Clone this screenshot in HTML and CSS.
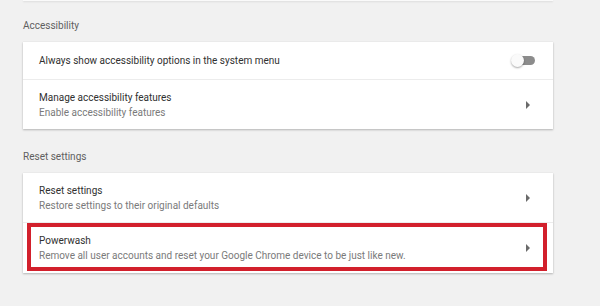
FILE: index.html
```html
<!DOCTYPE html>
<html>
<head>
<meta charset="utf-8">
<link rel="stylesheet" href="styles.css">
</head>
<body>
<div class="page">
  <div class="prev-card"></div>

  <h2 class="section-title first">Accessibility</h2>
  <div class="card">
    <div class="row single">
      <span class="label">Always show accessibility options in the system menu</span>
      <span class="toggle"><span class="knob"></span></span>
    </div>
    <div class="row double">
      <div class="texts">
        <div class="label">Manage accessibility features</div>
        <div class="sub">Enable accessibility features</div>
      </div>
      <span class="arrow"></span>
    </div>
  </div>

  <h2 class="section-title">Reset settings</h2>
  <div class="card">
    <div class="row double">
      <div class="texts">
        <div class="label">Reset settings</div>
        <div class="sub">Restore settings to their original defaults</div>
      </div>
      <span class="arrow"></span>
    </div>
    <div class="row double highlighted">
      <div class="texts">
        <div class="label">Powerwash</div>
        <div class="sub">Remove all user accounts and reset your Google Chrome device to be just like new.</div>
      </div>
      <span class="arrow"></span>
    </div>
  </div>
</div>
</body>
</html>
```

FILE: styles.css
```css
html, body {
  margin: 0;
  padding: 0;
  background: #f1f1f1;
  font-family: Roboto, "Liberation Sans", sans-serif;
  font-size: 10px;
  color: #333;
}

.page {
  width: 530px;
  margin-left: 23px;
  padding-bottom: 40px;
}

.prev-card {
  height: 1px;
  background: #fafafa;
  box-shadow: 0 1px 2px rgba(0, 0, 0, 0.12);
}

.section-title {
  margin: 18px 0 6px;
  font-size: 10px;
  font-weight: 400;
  color: #5f5f5f;
  line-height: 20px;
}

.section-title.first {
  margin-top: 15px;
}

.card {
  background: #fff;
  box-shadow: 0 1px 2px rgba(0, 0, 0, 0.25), 0 0 1px rgba(0, 0, 0, 0.08);
}

.row {
  display: flex;
  align-items: center;
  justify-content: space-between;
  padding: 0 18px 0 16px;
  border-top: 1px solid #ececec;
}

.row:first-child {
  border-top: none;
}

.row.single {
  height: 37px;
}

.row.double {
  height: 49px;
}

.row.highlighted {
  height: 50px;
}

.label {
  line-height: 15px;
  color: #303030;
}

.sub {
  line-height: 15px;
  color: #7a7a7a;
}

.highlighted .sub {
  line-height: 16px;
}

.toggle {
  position: relative;
  width: 20px;
  height: 9px;
  border-radius: 5px;
  background: #8c8c8c;
}

.knob {
  position: absolute;
  left: -4px;
  top: -2.5px;
  width: 13px;
  height: 13px;
  border-radius: 50%;
  background: #fafafa;
  box-shadow: 0 1px 2px rgba(0, 0, 0, 0.35);
}

.arrow {
  width: 0;
  height: 0;
  border-top: 4px solid transparent;
  border-bottom: 4px solid transparent;
  border-left: 4px solid #6a6a6a;
  margin-right: 5px;
}

.highlighted {
  position: relative;
}

.highlighted::after {
  content: "";
  position: absolute;
  left: 4px;
  right: 6px;
  top: 0;
  bottom: 2px;
  border: 4px solid #d2202c;
  box-sizing: border-box;
}
```
